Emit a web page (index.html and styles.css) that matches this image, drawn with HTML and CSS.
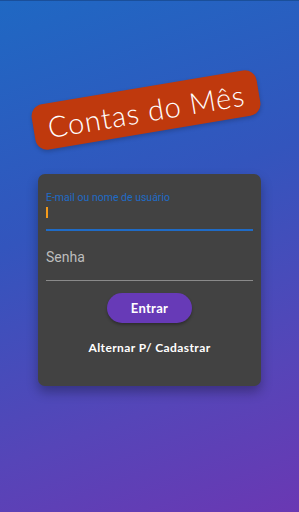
FILE: index.html
```html
<!DOCTYPE html>
<html lang="pt-BR">
<head>
	<meta charset="UTF-8">
	<meta name="viewport" content="width=device-width, initial-scale=1">
	<title>Contas do Mês</title>
	<link rel="stylesheet" href="styles.css">
</head>
<body>
	<div class="screen">
		<div class="title-wrap">
			<div class="title">Contas do Mês</div>
		</div>
		<form class="card" onsubmit="return false">
			<div class="field active">
				<label class="label-small" for="user">E-mail ou nome de usuário</label>
				<div class="input-line"><span class="caret"></span></div>
			</div>
			<div class="field plain">
				<span class="placeholder">Senha</span>
			</div>
			<div class="actions">
				<button class="btn" type="submit">Entrar</button>
				<button class="link" type="button">Alternar P/ Cadastrar</button>
			</div>
		</form>
	</div>
</body>
</html>
```

FILE: styles.css
```css
* {
	box-sizing: border-box;
}

body {
	margin: 0;
	font-family: "Lato", "Roboto", sans-serif;
}

.screen {
	width: 299px;
	height: 512px;
	border-top: 1px solid #1a4f9a;
	background: linear-gradient(160deg, #1f68c3 0%, #3355bd 40%, #5645b8 75%, #6a38b3 100%);
	display: flex;
	flex-direction: column;
	align-items: center;
	overflow: hidden;
}

.title-wrap {
	height: 173px;
	display: flex;
	align-items: center;
	justify-content: center;
	padding-top: 44px;
	padding-right: 8px;
}

.title {
	background: #bf390d;
	color: #fff;
	font-size: 29px;
	font-weight: 300;
	letter-spacing: 0.8px;
	width: 228px;
	height: 46px;
	border-radius: 12px;
	display: flex;
	align-items: center;
	justify-content: center;
	transform: rotate(-9.5deg);
	box-shadow: 0 2px 4px rgba(0, 0, 0, 0.2);
}

.card {
	width: 223px;
	height: 212px;
	background: #424242;
	border-radius: 7px;
	box-shadow: 0 6px 12px rgba(0, 0, 0, 0.3);
	padding: 18px 8px 0 8px;
	display: flex;
	flex-direction: column;
}

.field {
	display: flex;
	flex-direction: column;
}

.label-small {
	font-family: "Roboto", sans-serif;
	font-size: 10.5px;
	color: #1f6bc6;
	line-height: 12px;
}

.input-line {
	height: 27px;
	border-bottom: 2px solid #1f6bc6;
	padding-top: 3px;
}

.field.plain {
	height: 50px;
	border-bottom: 1px solid #8a8a8a;
}

.caret {
	display: block;
	width: 2px;
	height: 11px;
	background: #f59b1a;
}

.placeholder {
	font-family: "Roboto", sans-serif;
	font-size: 14px;
	line-height: 16px;
	color: #bdbdbd;
	margin-top: 18px;
}

.actions {
	display: flex;
	flex-direction: column;
	align-items: center;
	padding-top: 12px;
}

.btn {
	display: block;
	width: 85px;
	height: 30px;
	border: none;
	border-radius: 15px;
	background: #673ab7;
	color: #fff;
	font-family: "Lato", sans-serif;
	font-weight: 700;
	font-size: 13px;
	letter-spacing: 0.3px;
	box-shadow: 0 2px 3px rgba(0, 0, 0, 0.3);
}

.link {
	display: block;
	margin-top: 18px;
	padding: 0;
	line-height: 14px;
	border: none;
	background: none;
	color: #fff;
	font-family: "Lato", sans-serif;
	font-weight: 700;
	font-size: 12px;
	letter-spacing: 0.4px;
}
```
